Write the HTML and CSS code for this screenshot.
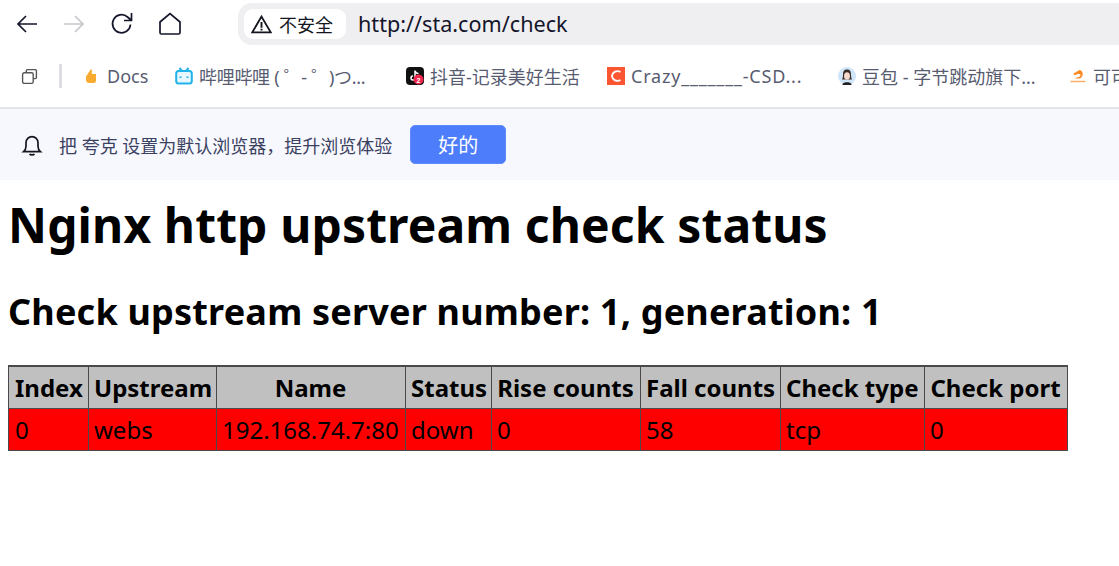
FILE: index.html
```html
<!DOCTYPE html>
<html lang="zh">
<head>
<meta charset="utf-8">
<title>Nginx http upstream check status</title>
<link rel="stylesheet" href="styles.css">
</head>
<body>
<header class="chrome">
  <div class="navbar">
    <svg class="nav-icon back" viewBox="0 0 24 24"><path d="M22 12H3M11 4l-8 8 8 8"/></svg>
    <svg class="nav-icon forward" viewBox="0 0 24 24"><path d="M2 12h19M13 4l8 8-8 8"/></svg>
    <svg class="nav-icon reload" viewBox="0 0 24 24"><path d="M20.500 12.500a9 9 0 1 1-3-7.500L21 8M21.500 1v7.500H14"/></svg>
    <svg class="nav-icon home" viewBox="0 0 24 24"><path d="M2 10 12 1.500 22 10v10.500a1.500 1.500 0 0 1-1.500 1.500h-17A1.500 1.500 0 0 1 2 20.500z"/></svg>
    <div class="address">
      <span class="insecure">
        <svg class="warn" viewBox="0 0 20 20"><path class="warn-tri" d="M10 2.500 18.800 17.500H1.200z"/><path class="warn-mark" d="M10 7.500v5.500M10 14v1.800"/></svg>
        不安全
      </span>
      <span class="url">http://sta.com/check</span>
    </div>
  </div>
  <div class="bookmarks">
    <svg class="tabs-icon" viewBox="0 0 16 16"><path d="M5 4.500V2.500a1 1 0 0 1 1-1h7.500a1 1 0 0 1 1 1V9a1 1 0 0 1-1 1h-2"/><rect x="1.500" y="4.500" width="10" height="10" rx="1.500"/></svg>
    <span class="divider"></span>
    <a class="bm bm-docs"><svg class="fav" viewBox="0 0 16 16"><path fill="#f8ab2e" d="M8 1c1.200.5 1 2.500.8 5H13v6.500c0 1.200-1 2.500-2.500 2.500H6c-1.500 0-3-1-3-3V8.500z"/></svg>Docs</a>
    <a class="bm bm-bili"><svg class="fav" viewBox="0 0 18 18"><path class="bili" d="M4.500 1 7 4M13.500 1 11 4"/><rect class="bili-face" x="1.200" y="4" width="15.600" height="12.500" rx="2.500"/><path class="bili" d="M5.500 9.500v1.500M12.500 9.500v1.500"/></svg>哔哩哔哩 ( ゜- ゜)つ...</a>
    <a class="bm bm-douyin"><svg class="fav" viewBox="0 0 18 18"><rect width="18" height="18" rx="4" fill="#111"/><path d="M9 3.500v7.500a2 2 0 1 1-2-2M9 3.500c.3 2 1.500 3 3.500 3" fill="none" stroke="#fff" stroke-width="1.500"/><circle cx="12.500" cy="12.500" r="5" fill="#f0264f"/><text class="badge" x="12.500" y="15.500">2</text></svg>抖音-记录美好生活</a>
    <a class="bm bm-csdn"><svg class="fav" viewBox="0 0 18 18"><rect width="18" height="18" fill="#fc5531"/><path d="M13.500 5A5.500 5.500 0 0 0 5 9a5.500 5.500 0 0 0 8.500 4" fill="none" stroke="#fff" stroke-width="1.800"/></svg><span class="crazy">Crazy_______-CSD...</span></a>
    <a class="bm bm-doubao"><svg class="fav" viewBox="0 0 18 18"><circle cx="9" cy="9" r="9" fill="#cfe6fa"/><path d="M9 2.500c3 0 4 2 4 5s.5 4 1 5H4c.5-1 1-2 1-5s1-5 4-5z" fill="#3a2a26"/><ellipse cx="9" cy="9" rx="3" ry="3.800" fill="#f6d9cc"/><path d="M4.500 17c1-2.500 8-2.500 9 0v1h-9z" fill="#222"/></svg>豆包 - 字节跳动旗下...</a>
    <a class="bm bm-ke"><svg class="fav" viewBox="0 0 18 18"><path d="M4.500 6.500 10.500 3c4 .5 4.500 6.500.5 8.500H6c1-1.500 5-1 5.500-3S8 6.500 5.500 8.500z" fill="#fb8a24"/><path d="M1.500 14.500h15" stroke="#fbb06a" stroke-width="1.500"/></svg>可可</a>
  </div>
</header>
<div class="notice">
  <svg class="bell" viewBox="0 0 20 20"><path d="M3 15.500h14c-1.200-1-2-2-2-4.500V8A5 5 0 0 0 5 8v3c0 2.500-.8 3.500-2 4.500zM8 17.500c.5 1 3.500 1 4 0"/></svg>
  <span class="notice-text">把 夸克 设置为默认浏览器，提升浏览体验</span>
  <button class="ok">好的</button>
</div>
<main class="page">
  <h1>Nginx http upstream check status</h1>
  <h2>Check upstream server number: 1, generation: 1</h2>
  <table>
    <colgroup>
      <col class="c1"><col class="c2"><col class="c3"><col class="c4"><col class="c5"><col class="c6"><col class="c7"><col class="c8">
    </colgroup>
    <tr class="head">
      <th>Index</th><th>Upstream</th><th>Name</th><th>Status</th><th>Rise counts</th><th>Fall counts</th><th>Check type</th><th>Check port</th>
    </tr>
    <tr class="down">
      <td>0</td><td>webs</td><td>192.168.74.7:80</td><td>down</td><td>0</td><td>58</td><td>tcp</td><td>0</td>
    </tr>
  </table>
</main>
</body>
</html>
```

FILE: styles.css
```css
* { box-sizing: border-box; }
html, body { margin: 0; padding: 0; background: #fff; overflow: hidden; }
body { font-family: "Noto Sans", "Noto Sans CJK SC", sans-serif; color: #000; height: 566px; }

.chrome { height: 109px; border-bottom: 2px solid #e4e5e9; overflow: hidden; }
.navbar { height: 49px; padding: 3px 0 0 15px; display: flex; align-items: flex-start; }
.nav-icon { width: 24px; height: 24px; margin-top: 9px; fill: none; stroke: #14162c; stroke-width: 1.700; flex: none; }
.forward { stroke: #c6c7cc; margin-left: 23px; }
.reload { margin-left: 24px; }
.home { margin-left: 24px; }
.address { margin-left: 56px; flex: 1; height: 42px; background: #efeff1; border-radius: 14px 0 0 14px; display: flex; align-items: center; padding-left: 6px; margin-right: -100px; }
.insecure { height: 30px; width: 102px; background: #fff; border-radius: 9px; display: flex; align-items: center; padding-left: 7px; gap: 7px; font-size: 18px; color: #14161f; flex: none; white-space: nowrap; }
.warn { width: 21px; height: 21px; flex: none; }
.warn-tri { fill: none; stroke: #14161f; stroke-width: 1.800; }
.warn-mark { fill: none; stroke: #14161f; stroke-width: 1.800; }
.url { margin: -2px 0 0 12px; font-size: 21.600px; color: #14152b; white-space: nowrap; }

.bookmarks { height: 58px; display: flex; align-items: center; padding: 0 0 4px 21px; white-space: nowrap; }
.tabs-icon { width: 17px; height: 17px; fill: none; stroke: #555; stroke-width: 1.300; flex: none; }
.divider { width: 3px; height: 24px; background: #dcdde0; margin: 0 21px 0 21px; flex: none; }
.bm { display: flex; align-items: center; font-size: 18px; color: #585c71; flex: none; }
.fav { width: 18px; height: 18px; margin-right: 6px; flex: none; fill: none; }
.bili { fill: none; stroke: #20b3ea; stroke-width: 2; }
.bili-face { fill: #e8f7fd; stroke: #20b3ea; stroke-width: 2; }
.badge { font: 700 7px "Liberation Sans", sans-serif; fill: #fff; text-anchor: middle; }
.crazy { letter-spacing: 0.800px; }
.bm-docs { width: 92px; }
.bm-bili { width: 231px; letter-spacing: -0.300px; }
.bm-douyin { width: 201px; }
.bm-csdn { width: 231px; }
.bm-doubao { width: 231px; }
.bm-docs .fav { margin-right: 8px; width: 16px; height: 16px; }

.notice { height: 71px; background: #f7f8fd; display: flex; align-items: center; padding: 0 0 0 20px; }
.bell { width: 24px; height: 24px; fill: none; stroke: #14161f; stroke-width: 1.400; flex: none; }
.notice-text { margin-left: 15px; font-size: 18px; color: #3b4163; white-space: nowrap; }
.ok { margin-left: 18px; width: 96px; height: 39px; margin-top: -1px; background: #4e7dfb; border: 1px solid #5f8afb; border-radius: 5px; color: #fff; font: 20px "Noto Sans CJK SC", sans-serif; padding: 0; }

.page { padding: 0 8px; }
h1 { margin: 13px 0 0; font-size: 48px; line-height: 64px; font-weight: 700; letter-spacing: 0.120px; white-space: nowrap; }
h2 { margin: 31px 0 0; font-size: 36px; line-height: 48px; font-weight: 700; letter-spacing: 0.200px; white-space: nowrap; }
table { margin-top: 29px; border-collapse: separate; border-spacing: 0; table-layout: fixed; width: 1060px; border: 1px solid #4a4a4a; }
.c1 { width: 80px; } .c2 { width: 128px; } .c3 { width: 189px; } .c4 { width: 86px; }
.c5 { width: 149px; } .c6 { width: 140px; } .c7 { width: 144px; }
th, td { height: 42px; padding: 0 6px; font-size: 24px; border-right: 1px solid #4a4a4a; border-top: 1px solid #4a4a4a; white-space: nowrap; overflow: hidden; }
th + th, td + td { padding-left: 5px; }
th:last-child, td:last-child { border-right: 0; }
.head th { background: #c0c0c0; font-weight: 700; text-align: center; }
.down td { background: #f00; text-align: left; }
```
